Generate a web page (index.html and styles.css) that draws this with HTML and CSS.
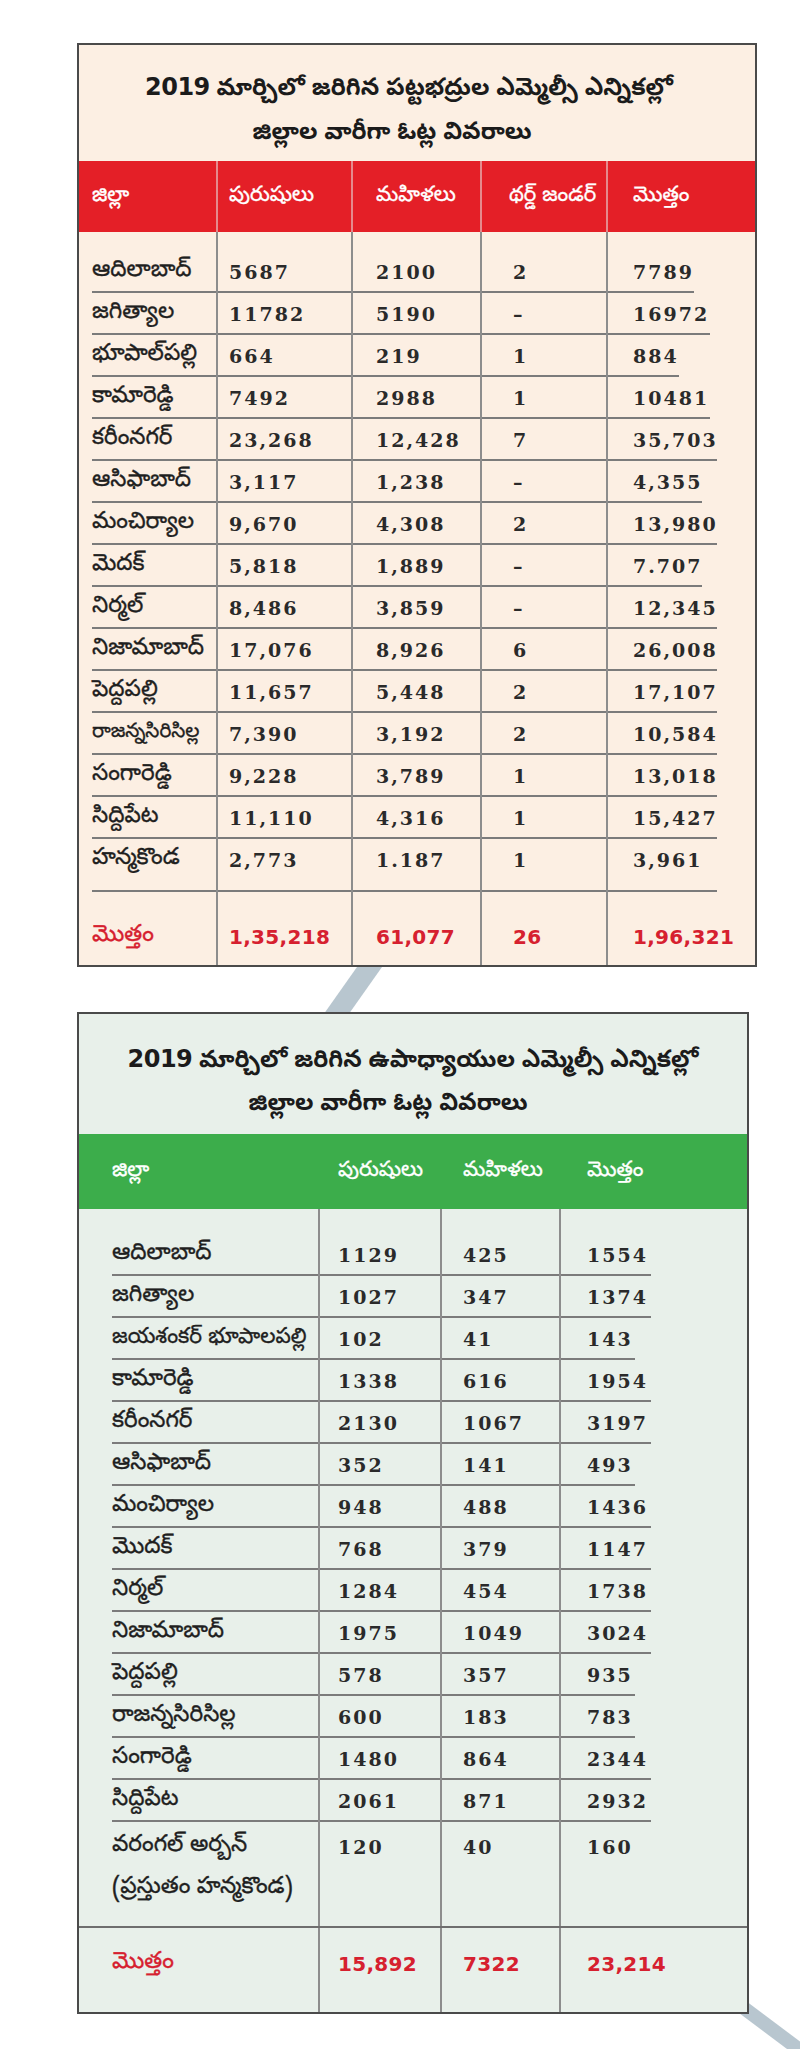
FILE: index.html
```html
<!DOCTYPE html>
<html lang="te">
<head>
<meta charset="utf-8">
<title>ఓట్ల వివరాలు</title>
<link rel="stylesheet" href="styles.css">
</head>
<body>
<div class="page">
  <svg class="deco" width="800" height="2049" viewBox="0 0 800 2049" aria-hidden="true">
    <polygon points="369,950 394,950 346,1018 321,1018"/>
    <polygon points="715,1995 738,1995 810,2049 787,2049"/>
  </svg>

  <section class="card card-grad">
    <h2 class="title">
      <span class="line l1"><span class="yr">2019</span> మార్చిలో జరిగిన పట్టభద్రుల ఎమ్మెల్సీ ఎన్నికల్లో</span>
      <span class="line l2">జిల్లాల వారీగా ఓట్ల వివరాలు</span>
    </h2>
    <div class="tbl">
      <div class="row head">
        <div class="c">జిల్లా</div><div class="c">పురుషులు</div><div class="c">మహిళలు</div><div class="c">థర్డ్ జండర్</div><div class="c">మొత్తం</div>
      </div>
      <div class="row first w602">
        <div class="c">ఆదిలాబాద్</div><div class="c n">5687</div><div class="c n">2100</div><div class="c n">2</div><div class="c n">7789</div>
      </div>
      <div class="row w618">
        <div class="c">జగిత్యాల</div><div class="c n">11782</div><div class="c n">5190</div><div class="c n">–</div><div class="c n">16972</div>
      </div>
      <div class="row w587">
        <div class="c">భూపాల్‌పల్లి</div><div class="c n">664</div><div class="c n">219</div><div class="c n">1</div><div class="c n">884</div>
      </div>
      <div class="row w618">
        <div class="c">కామారెడ్డి</div><div class="c n">7492</div><div class="c n">2988</div><div class="c n">1</div><div class="c n">10481</div>
      </div>
      <div class="row">
        <div class="c">కరీంనగర్</div><div class="c n">23,268</div><div class="c n">12,428</div><div class="c n">7</div><div class="c n">35,703</div>
      </div>
      <div class="row w610">
        <div class="c">ఆసిఫాబాద్</div><div class="c n">3,117</div><div class="c n">1,238</div><div class="c n">–</div><div class="c n">4,355</div>
      </div>
      <div class="row">
        <div class="c">మంచిర్యాల</div><div class="c n">9,670</div><div class="c n">4,308</div><div class="c n">2</div><div class="c n">13,980</div>
      </div>
      <div class="row w610">
        <div class="c">మెదక్</div><div class="c n">5,818</div><div class="c n">1,889</div><div class="c n">–</div><div class="c n">7.707</div>
      </div>
      <div class="row">
        <div class="c">నిర్మల్</div><div class="c n">8,486</div><div class="c n">3,859</div><div class="c n">–</div><div class="c n">12,345</div>
      </div>
      <div class="row">
        <div class="c">నిజామాబాద్</div><div class="c n">17,076</div><div class="c n">8,926</div><div class="c n">6</div><div class="c n">26,008</div>
      </div>
      <div class="row">
        <div class="c">పెద్దపల్లి</div><div class="c n">11,657</div><div class="c n">5,448</div><div class="c n">2</div><div class="c n">17,107</div>
      </div>
      <div class="row">
        <div class="c tight">రాజన్నసిరిసిల్ల</div><div class="c n">7,390</div><div class="c n">3,192</div><div class="c n">2</div><div class="c n">10,584</div>
      </div>
      <div class="row">
        <div class="c">సంగారెడ్డి</div><div class="c n">9,228</div><div class="c n">3,789</div><div class="c n">1</div><div class="c n">13,018</div>
      </div>
      <div class="row">
        <div class="c">సిద్దిపేట</div><div class="c n">11,110</div><div class="c n">4,316</div><div class="c n">1</div><div class="c n">15,427</div>
      </div>
      <div class="row last">
        <div class="c">హన్మకొండ</div><div class="c n">2,773</div><div class="c n">1.187</div><div class="c n">1</div><div class="c n">3,961</div>
      </div>
      <div class="row total">
        <div class="c">మొత్తం</div><div class="c t">1,35,218</div><div class="c t">61,077</div><div class="c t">26</div><div class="c t">1,96,321</div>
      </div>
    </div>
  </section>

  <section class="card card-teach">
    <h2 class="title">
      <span class="line l1"><span class="yr">2019</span> మార్చిలో జరిగిన ఉపాధ్యాయుల ఎమ్మెల్సీ ఎన్నికల్లో</span>
      <span class="line l2">జిల్లాల వారీగా ఓట్ల వివరాలు</span>
    </h2>
    <div class="tbl">
      <div class="row head">
        <div class="c">జిల్లా</div><div class="c">పురుషులు</div><div class="c">మహిళలు</div><div class="c">మొత్తం</div>
      </div>
      <div class="row first">
        <div class="c">ఆదిలాబాద్</div><div class="c n">1129</div><div class="c n">425</div><div class="c n">1554</div>
      </div>
      <div class="row">
        <div class="c">జగిత్యాల</div><div class="c n">1027</div><div class="c n">347</div><div class="c n">1374</div>
      </div>
      <div class="row w523">
        <div class="c snug">జయశంకర్ భూపాలపల్లి</div><div class="c n">102</div><div class="c n">41</div><div class="c n">143</div>
      </div>
      <div class="row">
        <div class="c">కామారెడ్డి</div><div class="c n">1338</div><div class="c n">616</div><div class="c n">1954</div>
      </div>
      <div class="row">
        <div class="c">కరీంనగర్</div><div class="c n">2130</div><div class="c n">1067</div><div class="c n">3197</div>
      </div>
      <div class="row w523">
        <div class="c">ఆసిఫాబాద్</div><div class="c n">352</div><div class="c n">141</div><div class="c n">493</div>
      </div>
      <div class="row">
        <div class="c">మంచిర్యాల</div><div class="c n">948</div><div class="c n">488</div><div class="c n">1436</div>
      </div>
      <div class="row">
        <div class="c">మొదక్</div><div class="c n">768</div><div class="c n">379</div><div class="c n">1147</div>
      </div>
      <div class="row">
        <div class="c">నిర్మల్</div><div class="c n">1284</div><div class="c n">454</div><div class="c n">1738</div>
      </div>
      <div class="row">
        <div class="c">నిజామాబాద్</div><div class="c n">1975</div><div class="c n">1049</div><div class="c n">3024</div>
      </div>
      <div class="row w523">
        <div class="c">పెద్దపల్లి</div><div class="c n">578</div><div class="c n">357</div><div class="c n">935</div>
      </div>
      <div class="row w523">
        <div class="c">రాజన్నసిరిసిల్ల</div><div class="c n">600</div><div class="c n">183</div><div class="c n">783</div>
      </div>
      <div class="row">
        <div class="c">సంగారెడ్డి</div><div class="c n">1480</div><div class="c n">864</div><div class="c n">2344</div>
      </div>
      <div class="row">
        <div class="c">సిద్దిపేట</div><div class="c n">2061</div><div class="c n">871</div><div class="c n">2932</div>
      </div>
      <div class="row last">
        <div class="c">వరంగల్ అర్బన్<br>(ప్రస్తుతం హన్మకొండ)</div><div class="c n">120</div><div class="c n">40</div><div class="c n">160</div>
      </div>
      <div class="row total">
        <div class="c">మొత్తం</div><div class="c t">15,892</div><div class="c t">7322</div><div class="c t">23,214</div>
      </div>
    </div>
  </section>
</div>
</body>
</html>
```

FILE: styles.css
```css
html, body {
  margin: 0;
  padding: 0;
  background: #ffffff;
}

.page {
  position: relative;
  width: 800px;
  height: 2049px;
  overflow: hidden;
  padding: 43px 0 0 77px;
  box-sizing: border-box;
  font-family: "Noto Sans Telugu", "Noto Sans Telugu UI", "Lohit Telugu", "Gurajada", "Noto Sans", sans-serif;
  color: #1f1f1f;
}

.deco {
  position: absolute;
  left: 0;
  top: 0;
  z-index: 0;
}

.deco polygon {
  fill: #b8c6cf;
}

.card {
  position: relative;
  z-index: 1;
  border: 2px solid #4a4a4a;
  box-sizing: border-box;
}

.card-grad {
  width: 680px;
  background: #fcefe3;
}

.card-teach {
  width: 672px;
  margin-top: 45px;
  background: #e8f0ea;
}

.title {
  margin: 0;
  display: flex;
  flex-direction: column;
  align-items: center;
  font-weight: 700;
  font-size: 24px;
  color: #1b1b1b;
}

.card-grad .title {
  padding: 20px 0 4px;
  line-height: 44px;
}

.card-grad .l1 {
  margin-right: 16px;
}

.card-teach .title {
  padding: 24px 0 7px;
  line-height: 43px;
}

.l2 {
  margin-right: 50px;
}

.yr {
  font-family: "DejaVu Sans", "Liberation Sans", sans-serif;
  font-size: 24px;
  letter-spacing: -0.5px;
}

.row {
  display: grid;
  align-items: stretch;
  font-size: 23px;
  line-height: 42px;
  height: 42px;
  box-sizing: border-box;
  background-repeat: no-repeat;
  background-image: linear-gradient(#7b7b7b, #7b7b7b);
  -webkit-text-stroke: 0.35px currentColor;
}

.card-grad .row {
  grid-template-columns: 137px 135px 129px 126px 149px;
  background-size: 625px 2px;
  background-position: 13px 100%;
}

.card-grad .row.w602 { background-size: 602px 2px; }
.card-grad .row.w618 { background-size: 618px 2px; }
.card-grad .row.w587 { background-size: 587px 2px; }
.card-grad .row.w610 { background-size: 610px 2px; }

.card-teach .row {
  grid-template-columns: 239px 122px 119px 188px;
  background-size: 539px 2px;
  background-position: 33px 100%;
}

.card-teach .row.w523 { background-size: 523px 2px; }

.c {
  box-sizing: border-box;
  white-space: nowrap;
}

.c + .c {
  border-left: 2px solid #8d8d8d;
}

.tight {
  font-size: 20px;
}

.snug {
  font-size: 21.5px;
}

/* column insets, graduates card */
.card-grad .c:nth-child(1) { padding-left: 13px; }
.card-grad .c:nth-child(2) { padding-left: 11px; }
.card-grad .c:nth-child(3) { padding-left: 23px; }
.card-grad .c:nth-child(4) { padding-left: 31px; }
.card-grad .c:nth-child(5) { padding-left: 25px; }

/* column insets, teachers card */
.card-teach .c:nth-child(1) { padding-left: 33px; }
.card-teach .c:nth-child(2) { padding-left: 18px; }
.card-teach .c:nth-child(3) { padding-left: 21px; }
.card-teach .c:nth-child(4) { padding-left: 26px; }

.head {
  background-image: none;
  color: #ffffff;
  font-size: 21px;
}

.head .c {
  display: flex;
  align-items: center;
}

.card-grad .head {
  height: 71px;
  background-color: #e41f27;
}

.card-grad .head .c:nth-child(4) {
  padding-left: 27px;
}

.card-grad .head .c + .c {
  border-left-color: #e58a8d;
}

.card-teach .head {
  height: 75px;
  background-color: #3cad4b;
}

.card-teach .head .c + .c {
  border-left-color: transparent;
}

.card-grad .first {
  height: 61px;
}

.card-grad .first .c {
  padding-top: 19px;
}

.card-teach .first {
  height: 67px;
}

.card-teach .first .c {
  padding-top: 25px;
}

.card-grad .last {
  height: 53px;
}

.card-teach .last {
  height: 104px;
  background-image: none;
}

.card-teach .last .c {
  padding-top: 4px;
}

.n {
  font-family: "DejaVu Serif", "Liberation Serif", serif;
  font-weight: 700;
  font-size: 19px;
  letter-spacing: 2px;
  color: #2a2a2a;
  -webkit-text-stroke: 0;
}

.total {
  background-image: none;
  color: #d6202f;
}

.card-grad .total {
  height: 73px;
}

.card-grad .total .c {
  padding-top: 24px;
}

.card-teach .total {
  height: 86px;
  border-top: 2px solid #6e6e6e;
}

.card-teach .total .c {
  padding-top: 15px;
}

.t {
  font-family: "DejaVu Sans", "Liberation Sans", sans-serif;
  font-weight: 700;
  font-size: 20px;
  letter-spacing: 0.3px;
  -webkit-text-stroke: 0;
}
```
